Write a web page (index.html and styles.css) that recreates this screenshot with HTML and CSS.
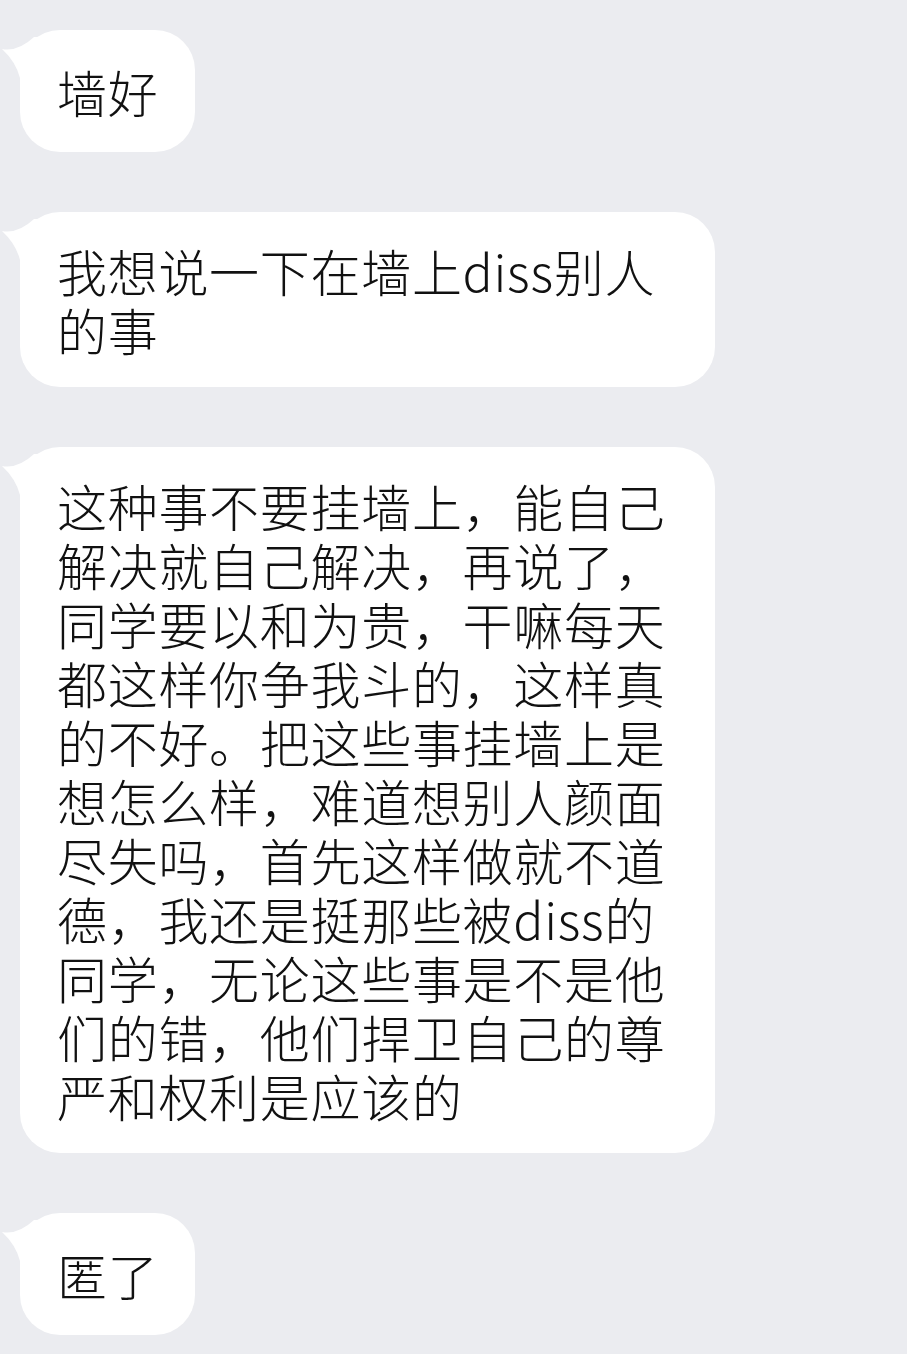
FILE: index.html
```html
<!DOCTYPE html>
<html lang="zh-CN">
<head>
<meta charset="utf-8">
<title>Chat</title>
<link rel="stylesheet" href="styles.css">
</head>
<body>
<div class="chat">
  <div class="msg">
    <svg class="tail" width="40" height="50" viewBox="0 0 40 50"><path d="M2 19 Q18 22 34 7 L40 7 L40 48 L20 48 Q16 32 2 19 Z" fill="#fff"/></svg>
    <div class="bubble">墙好</div>
  </div>
  <div class="msg">
    <svg class="tail" width="40" height="50" viewBox="0 0 40 50"><path d="M2 19 Q18 22 34 7 L40 7 L40 48 L20 48 Q16 32 2 19 Z" fill="#fff"/></svg>
    <div class="bubble">我想说一下在墙上diss别人的事</div>
  </div>
  <div class="msg">
    <svg class="tail" width="40" height="50" viewBox="0 0 40 50"><path d="M2 19 Q18 22 34 7 L40 7 L40 48 L20 48 Q16 32 2 19 Z" fill="#fff"/></svg>
    <div class="bubble">这种事不要挂墙上，能自己解决就自己解决，再说了，同学要以和为贵，干嘛每天都这样你争我斗的，这样真的不好。把这些事挂墙上是想怎么样，难道想别人颜面尽失吗，首先这样做就不道德，我还是挺那些被diss的同学，无论这些事是不是他们的错，他们捍卫自己的尊严和权利是应该的</div>
  </div>
  <div class="msg">
    <svg class="tail" width="40" height="50" viewBox="0 0 40 50"><path d="M2 19 Q18 22 34 7 L40 7 L40 48 L20 48 Q16 32 2 19 Z" fill="#fff"/></svg>
    <div class="bubble">匿了</div>
  </div>
</div>
</body>
</html>
```

FILE: styles.css
```css
html, body {
  margin: 0;
  padding: 0;
  background: #ebecf0;
}
.chat {
  display: flex;
  flex-direction: column;
  align-items: flex-start;
  gap: 60px;
  padding: 30px 0 0 20px;
  font-family: "Noto Sans CJK SC", "Noto Sans", sans-serif;
  font-size: 50px;
  font-weight: 300;
  line-height: 59px;
  color: #111;
}
.msg {
  position: relative;
}
.tail {
  position: absolute;
  left: -20px;
  top: 0;
}
.bubble {
  position: relative;
  box-sizing: border-box;
  display: flex;
  align-items: center;
  min-height: 122px;
  background: #fff;
  border-radius: 40px;
  padding: 29px 37px 28px 37px;
  max-width: 695px;
  letter-spacing: 0.7px;
  word-break: break-all;
}
```
